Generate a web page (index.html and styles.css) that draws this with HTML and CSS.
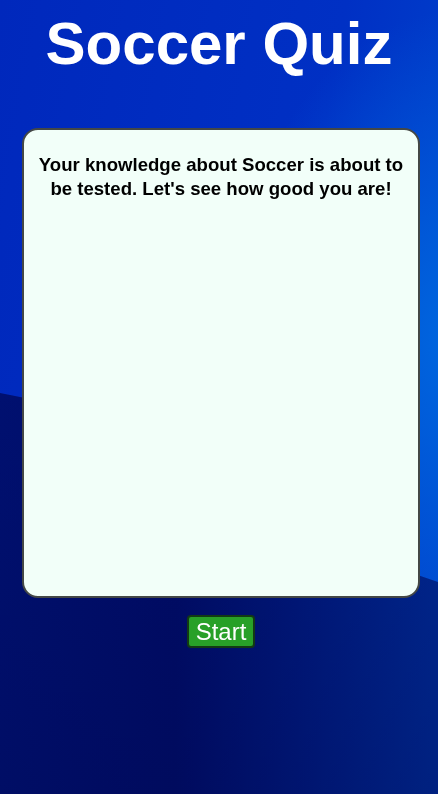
FILE: index.html
```html
<!DOCTYPE html>
<html>
<head>
<meta charset="utf-8">
<link rel="stylesheet" href="styles.css">
</head>
<body>
<main class="page">
  <h1 class="title">Soccer Quiz</h1>
  <section class="card">
    <p class="intro">Your knowledge about Soccer is about to be tested. Let's see how good you are!</p>
  </section>
  <button class="start">Start</button>
</main>
</body>
</html>
```
FILE: styles.css
```css
html, body {
  margin: 0;
  padding: 0;
}
body {
  font-family: "Liberation Sans", Arial, sans-serif;
  min-height: 794px;
  background:
    radial-gradient(ellipse 230px 330px at 460px 340px, rgba(0,108,226,0.9), rgba(0,108,226,0) 100%),
    linear-gradient(100deg, #0028bc 0%, #0030c4 60%, #0048d0 100%);
}
body::before {
  content: "";
  position: fixed;
  inset: 0;
  z-index: -1;
  clip-path: polygon(0 393px, 60px 405px, 200px 470px, 330px 545px, 438px 582px, 438px 794px, 0 794px);
  background:
    linear-gradient(to bottom, rgba(0,0,40,0) 0%, rgba(0,0,40,0.25) 100%),
    linear-gradient(to right, #00127a 0%, #000e70 40%, #001c88 70%, #002c9e 100%);
}
.page {
  display: flex;
  flex-direction: column;
  align-items: center;
  padding-top: 9px;
}
.title {
  margin: 0;
  color: #ffffff;
  font-size: 60px;
  font-weight: bold;
  line-height: 69px;
}
.card {
  box-sizing: border-box;
  width: 398px;
  height: 470px;
  margin-top: 50px;
  margin-left: 4px;
  background: #f2fff9;
  border: 2px solid #444846;
  border-radius: 16px;
  padding: 23px 10px;
}
.intro {
  margin: 0;
  text-align: center;
  font-size: 18.6px;
  font-weight: bold;
  line-height: 24px;
  color: #000;
}
.start {
  margin-top: 17px;
  margin-left: 4px;
  font-family: "Liberation Sans", Arial, sans-serif;
  font-size: 24px;
  color: #ffffff;
  background: #28a028;
  border: 2px solid #123a14;
  border-radius: 4px;
  padding: 0 7px;
  height: 33px;
  line-height: 29px;
}
```
